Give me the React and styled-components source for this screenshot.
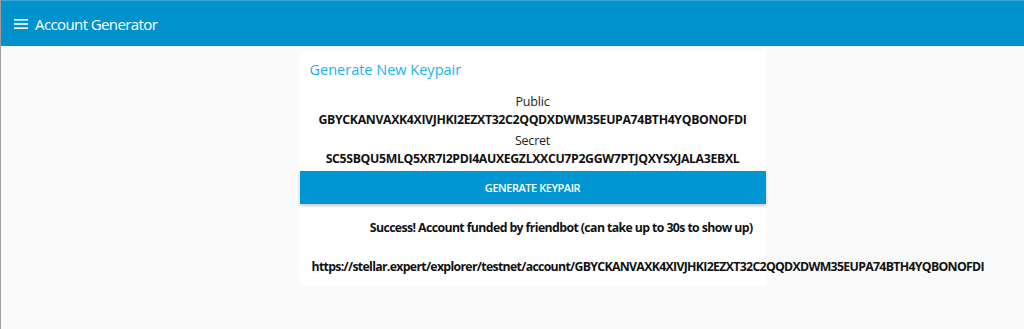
import React from 'react';
import styled, { createGlobalStyle } from 'styled-components';

const GlobalStyle = createGlobalStyle`
	html, body {
		margin: 0;
		padding: 0;
		background: #fafafa;
		font-family: "Open Sans", "Noto Sans", sans-serif;
	}
`;

const Page = styled.div`
	min-height: 329px;
	border-left: 1px solid #9e9e9e;
	box-sizing: border-box;
	background: #fafafa;
`;

const AppBar = styled.header`
	height: 46px;
	background: #0092cc;
	border-top: 1px solid #3aa9d9;
	box-sizing: border-box;
	display: flex;
	align-items: center;
	padding-left: 13px;
	gap: 7px;
	color: #fff;
`;

const Title = styled.h1`
	margin: 0;
	font-size: 15px;
	font-weight: 400;
	letter-spacing: -0.6px;
`;

const Main = styled.main`
	display: flex;
	justify-content: center;
	padding: 5px 0 0 40px;
`;

const Card = styled.section`
	width: 466px;
	background: #fff;
	display: flex;
	flex-direction: column;
	padding-bottom: 10px;
`;

const CardTitle = styled.h2`
	margin: 0;
	padding: 9px 10px 0;
	font-size: 14.5px;
	font-weight: 400;
	color: #1cb0ee;
	line-height: 20px;
`;

const KeyBlock = styled.div`
	display: flex;
	flex-direction: column;
	align-items: center;
	margin-top: ${(p) => p.top}px;
`;

const Label = styled.div`
	font-size: 12.5px;
	color: #222;
	line-height: 17px;
	letter-spacing: -0.2px;
`;

const KeyValue = styled.div`
	font-size: 12.3px;
	font-weight: 700;
	color: #111;
	line-height: 19px;
	letter-spacing: -0.35px;
`;

const Button = styled.button`
	margin-top: 3px;
	height: 33px;
	border: none;
	background: #0096d3;
	color: #fff;
	font-family: inherit;
	font-size: 11px;
	font-weight: 600;
	letter-spacing: -0.45px;
	box-shadow: 0 2px 3px rgba(0, 0, 0, 0.22);
	cursor: pointer;
`;

const Status = styled.div`
	text-align: right;
	padding: 15px 13px 0 0;
	font-size: 12.3px;
	font-weight: 700;
	color: #111;
	line-height: 18px;
	letter-spacing: -0.6px;
`;

const Link = styled.div`
	padding: 21px 0 0 12px;
	font-size: 12.3px;
	font-weight: 700;
	color: #111;
	line-height: 18px;
	white-space: nowrap;
	letter-spacing: -0.68px;
`;

function MenuIcon() {
	return (
		<svg width="14" height="12" viewBox="0 0 14 12">
			<rect x="0" y="1" width="14" height="1.6" fill="#fff" />
			<rect x="0" y="5.2" width="14" height="1.6" fill="#fff" />
			<rect x="0" y="9.4" width="14" height="1.6" fill="#fff" />
		</svg>
	);
}

const publicKey = 'GBYCKANVAXK4XIVJHKI2EZXT32C2QQDXDWM35EUPA74BTH4YQBONOFDI';
const secretKey = 'SC5SBQU5MLQ5XR7I2PDI4AUXEGZLXXCU7P2GGW7PTJQXYSXJALA3EBXL';

export default function App() {
	return (
		<Page>
			<GlobalStyle />
			<AppBar>
				<MenuIcon />
				<Title>Account Generator</Title>
			</AppBar>
			<Main>
				<Card>
					<CardTitle>Generate New Keypair</CardTitle>
					<KeyBlock top={13}>
						<Label>Public</Label>
						<KeyValue>{publicKey}</KeyValue>
					</KeyBlock>
					<KeyBlock top={3}>
						<Label>Secret</Label>
						<KeyValue>{secretKey}</KeyValue>
					</KeyBlock>
					<Button>GENERATE KEYPAIR</Button>
					<Status>Success! Account funded by friendbot (can take up to 30s to show up)</Status>
					<Link>https://stellar.expert/explorer/testnet/account/{publicKey}</Link>
				</Card>
			</Main>
		</Page>
	);
}
